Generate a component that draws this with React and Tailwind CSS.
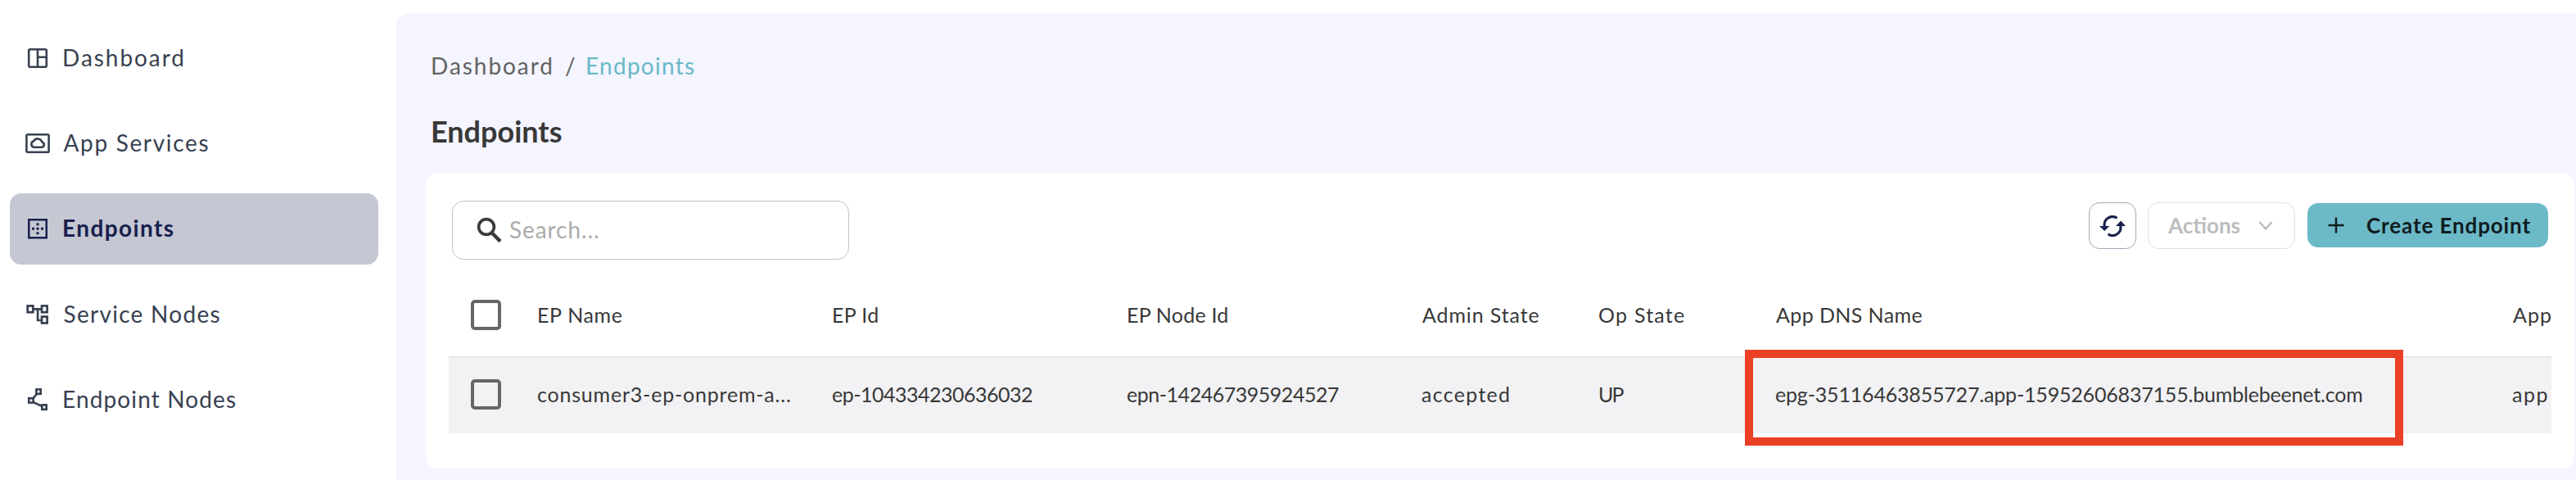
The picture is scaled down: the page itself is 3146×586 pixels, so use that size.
import React from "react";

const DashboardIcon = () => (
  <svg width="30" height="30" viewBox="0 0 30 30" fill="none" stroke="currentColor" strokeWidth="2.6">
    <rect x="4.2" y="4.2" width="21.6" height="21.6" rx="1.8" />
    <path d="M15 4v22M15 13.8h11" />
  </svg>
);

const CloudBoxIcon = () => (
  <svg width="30" height="30" viewBox="0 0 30 30" fill="none" stroke="currentColor" strokeWidth="2.6">
    <rect x="1.4" y="4.2" width="27.2" height="21.6" rx="1.4" />
    <path d="M10.3 19.8h9.4a3.2 3.2 0 0 0 .7-6.3 5.6 5.6 0 0 0-10.3-1.2 3.9 3.9 0 0 0 .2 7.5z" strokeLinejoin="round" />
  </svg>
);

const EndpointIcon = () => (
  <svg width="30" height="30" viewBox="0 0 30 30" fill="currentColor">
    <path d="M3 3h24v24.5H3zM5.5 5.5v19.5h19V5.5z" fillRule="evenodd" />
    <rect x="13.5" y="8.3" width="3" height="3" />
    <rect x="8" y="13.7" width="3" height="3" />
    <rect x="13.5" y="13.7" width="3" height="3" />
    <rect x="19" y="13.7" width="3" height="3" />
    <rect x="13.5" y="19.2" width="3" height="3" />
  </svg>
);

const TreeIcon = () => (
  <svg width="30" height="30" viewBox="0 0 30 30" fill="none" stroke="currentColor" strokeWidth="2.7">
    <rect x="2.7" y="4.4" width="6.6" height="7.8" />
    <rect x="20" y="4.4" width="6.6" height="7.8" />
    <rect x="20" y="17.6" width="6.6" height="7.8" />
    <path d="M9 8.4h11M15.1 8.4V22H20" />
  </svg>
);

const PolylineIcon = () => (
  <svg width="30" height="30" viewBox="0 0 30 30" fill="none" stroke="currentColor" strokeWidth="2.6">
    <rect x="13.4" y="2.4" width="5.4" height="5.4" />
    <rect x="4.2" y="13.2" width="5.4" height="5.4" />
    <rect x="20.3" y="21.4" width="5.4" height="5.4" />
    <path d="M14 7.8l-4.6 5.6M9.4 17.8l10.9 5.2" />
  </svg>
);

const SearchIcon = () => (
  <svg width="32" height="32" viewBox="0 0 32 32" fill="none" stroke="#3b3b3b" strokeWidth="3.6">
    <circle cx="12" cy="12" r="9.4" />
    <path d="M19.2 19.8l9.8 9.8" strokeWidth="4.4" />
  </svg>
);

const SyncIcon = () => (
  <svg width="34" height="26" viewBox="0 0 34 26" fill="none" stroke="#18204d" strokeWidth="3.1">
    <path d="M22.5 3.2A9.9 9.9 0 0 0 7.3 13.5" />
    <path d="M11.5 22.8A9.9 9.9 0 0 0 26.7 12.5" />
    <path d="M1 13h12.2L7.2 19zM21 13h12L27.2 6.4z" fill="#18204d" stroke="none" />
  </svg>
);

const nav = [
  { label: "Dashboard", Icon: DashboardIcon, cls: "tracking-[1.95px] text-[#374151]" },
  { label: "App Services", Icon: CloudBoxIcon, cls: "tracking-[1.67px] text-[#374151]" },
  { label: "Endpoints", Icon: EndpointIcon, cls: "tracking-[1.4px] text-[#18204d] font-bold", active: true },
  { label: "Service Nodes", Icon: TreeIcon, cls: "tracking-[1.28px] text-[#374151]" },
  { label: "Endpoint Nodes", Icon: PolylineIcon, cls: "tracking-[1.13px] text-[#374151]" },
];

const columns = [
  ["EP Name", "tracking-[0.66px]", "consumer3-ep-onprem-a...", "tracking-[0.79px]"],
  ["EP Id", "tracking-[0.38px]", "ep-104334230636032", "tracking-[-0.5px]"],
  ["EP Node Id", "tracking-[0.23px]", "epn-142467395924527", "tracking-[-0.47px]"],
  ["Admin State", "tracking-[0.88px]", "accepted", "tracking-[1.3px]"],
  ["Op State", "tracking-[1.24px]", "UP", "tracking-[-2px]"],
  ["App DNS Name", "tracking-[0.4px]", "epg-35116463855727.app-15952606837155.bumblebeenet.com", "tracking-[-0.18px]"],
  ["App", "tracking-[1px]", "app", "tracking-[1.5px]"],
];

const grid = "grid grid-cols-[108px_360px_360px_360px_216px_216px_900px_48px] items-center overflow-hidden";

const Checkbox = () => (
  <div className="ml-[27px] size-[37px] rounded-[5px] border-4 border-[#666666]" />
);

export default function App() {
  return (
    <div className="flex h-[586px] w-[3146px] overflow-hidden bg-white font-['Lato','Liberation_Sans',sans-serif] text-[28px] leading-[34px] whitespace-nowrap">
      <nav className="flex w-[484px] shrink-0 flex-col gap-[17.3px] pt-[27.4px] pr-[22px] pl-3">
        {nav.map(({ label, Icon, cls, active }) => (
          <div
            key={label}
            className={`flex h-[87px] shrink-0 items-center gap-[15px] rounded-[14px] pl-[19px] ${cls} ${active ? "bg-[#c5c7d3]" : ""}`}
          >
            <Icon />
            <span className={`pb-[2px] ${label === "App Services" || label === "Service Nodes" ? "ml-[1.5px]" : ""}`}>{label}</span>
          </div>
        ))}
      </nav>

      <main className="mt-[17px] min-w-0 grow rounded-tl-[14px] bg-[#f4f5ff] pl-9">
        <div className="mt-[46px] flex h-[34px] pl-[6px]">
          <span className="w-[164px] tracking-[1.95px] text-[#626262]">Dashboard</span>
          <span className="w-[25px] text-[#626262]">/</span>
          <span className="tracking-[1.27px] text-[#69b9c8]">Endpoints</span>
        </div>
        <h1 className="mt-[41px] pl-[6px] text-[36px] leading-[44px] font-bold text-[#383838]">Endpoints</h1>

        <section className="mt-[30px] h-[360px] w-[2624px] rounded-[14px] bg-white pt-[33px] pr-7 pl-7">
          <div className="flex items-start pl-1">
            <div className="flex h-[72px] w-[485px] items-center rounded-[14px] border border-[#c2c2c2] pl-[29px]">
              <SearchIcon />
              <span className="pb-[2px] pl-[8px] tracking-[0.92px] text-[#ababab]">Search...</span>
            </div>
            <div className="mt-[2px] mr-[4px] ml-auto flex items-start text-[26px] font-bold">
              <div className="flex h-[57px] w-[58px] items-center justify-center rounded-[13px] border border-[#a5a7b9]">
                <SyncIcon />
              </div>
              <div className="ml-[14px] flex h-[57px] w-[180px] items-center justify-between rounded-[13px] border border-[#e0e0e0] pr-[26px] pl-6 text-[#bdbdbd]">
                <span className="pb-[2px]">Actions</span>
                <svg width="18" height="12" viewBox="0 0 18 12" fill="none" stroke="#bdbdbd" strokeWidth="2.5">
                  <path d="M1.5 1.2l7.5 8.2 7.5-8.2" />
                </svg>
              </div>
              <div className="mt-px ml-[15px] flex h-[54px] w-[294px] items-center rounded-[13px] bg-[#6cb9c8] pl-[25px] text-[#101c20]">
                <svg width="20" height="20" viewBox="0 0 20 20" fill="none" stroke="currentColor" strokeWidth="2.4">
                  <path d="M10 .5v19M.5 10h19" />
                </svg>
                <span className="pb-px pl-[27px] tracking-[0.89px]">Create Endpoint</span>
              </div>
            </div>
          </div>

          <div className="mt-[16px] w-[2568px] text-[25px] text-[#383838]">
            <div className={`${grid} h-[103px] border-b border-[#dcdcdc]`}>
              <Checkbox />
              {columns.map(([head, track]) => (
                <span key={head} className={`pb-px ${track} ${head.startsWith("A") ? "pl-px" : ""}`}>{head}</span>
              ))}
            </div>
            <div className="relative">
              <div className={`${grid} h-[93px] bg-[#f2f2f4] pb-[2px]`}>
                <Checkbox />
                {columns.map(([head, , value, track]) => (
                  <span key={head} className={`pb-[2px] ${track}`}>{value}</span>
                ))}
              </div>
              <div className="absolute top-[-9px] left-[1583px] h-[117px] w-[804px] border-10 border-[#ea4025]" />
            </div>
          </div>
        </section>
      </main>
    </div>
  );
}
